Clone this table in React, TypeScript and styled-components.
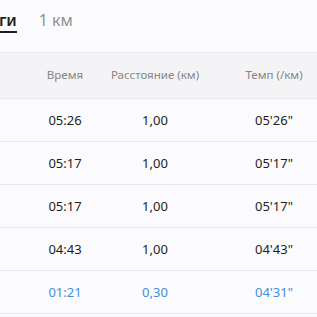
import React from "react";
import styled, { createGlobalStyle } from "styled-components";

const Global = createGlobalStyle`
  html, body { margin: 0; padding: 0; background: #fbfbfd; overflow: hidden; }
  body { font-family: "Noto Sans", "Open Sans", sans-serif; }
`;

const Page = styled.div`
  width: 317px;
  height: 317px;
  overflow: hidden;
  background: #fbfbfd;
`;

const Tabs = styled.div`
  display: flex;
  align-items: flex-start;
  gap: 22px;
  height: 53px;
  margin-left: -30px;
  border-bottom: 1px solid #ececee;
  box-sizing: border-box;
  padding-top: 9px;
`;

const Tab = styled.div<{ $active?: boolean }>`
  font-size: 16px;
  line-height: 22px;
  font-weight: ${(p) => (p.$active ? 600 : 400)};
  color: ${(p) => (p.$active ? "#1f1f1f" : "#8f8f8f")};
  padding-bottom: 0px;
  border-bottom: 2px solid ${(p) => (p.$active ? "#1f1f1f" : "transparent")};
`;

const Grid = styled.div`
  display: grid;
  grid-template-columns: 20px 90px 90px 148px;
`;

const HeaderRow = styled(Grid)`
  height: 46px;
  align-items: center;
  background: #f4f4f6;
  border-bottom: 1px solid #e8e8ea;
  box-sizing: border-box;
  padding-bottom: 2px;
`;

const HeadCell = styled.div`
  text-align: center;
  font-size: 11.5px;
  color: #858585;
  white-space: nowrap;
`;

const Row = styled(Grid)`
  height: 43px;
  align-items: center;
  border-bottom: 1px solid #e8e8ea;
  box-sizing: border-box;
`;

const Cell = styled.div<{ $highlight?: boolean }>`
  text-align: center;
  font-size: 13px;
  color: ${(p) => (p.$highlight ? "#3f8fe0" : "#1e1e1e")};
  white-space: nowrap;
`;

const rows = [
  ["05:26", "1,00", "05'26\""],
  ["05:17", "1,00", "05'17\""],
  ["05:17", "1,00", "05'17\""],
  ["04:43", "1,00", "04'43\""],
  ["01:21", "0,30", "04'31\""],
];

export default function App() {
  return (
    <Page>
      <Global />
      <Tabs>
        <Tab $active>Круги</Tab>
        <Tab>1 км</Tab>
      </Tabs>
      <HeaderRow>
        <span />
        <HeadCell>Время</HeadCell>
        <HeadCell>Расстояние (км)</HeadCell>
        <HeadCell>Темп (/км)</HeadCell>
      </HeaderRow>
      {rows.map((r, i) => (
        <Row key={i}>
          <span />
          {r.map((v, j) => (
            <Cell key={j} $highlight={i === rows.length - 1}>
              {v}
            </Cell>
          ))}
        </Row>
      ))}
    </Page>
  );
}
